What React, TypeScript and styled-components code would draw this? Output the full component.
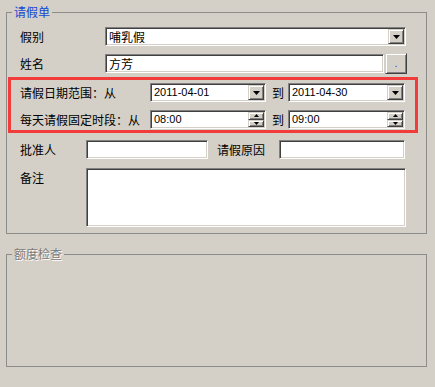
import * as React from 'react';
import styled, { createGlobalStyle } from 'styled-components';

const GlobalStyle = createGlobalStyle`
html, body {
  margin: 0;
  background: #d4d0c8;
}
body {
  font-family: "Noto Sans CJK SC", "Liberation Sans", sans-serif;
  font-size: 12px;
  color: #000;
}
`;

const Page = styled.div`
width: 435px;
height: 387px;
box-sizing: border-box;
padding: 5px 8px 0 6px;
display: flex;
flex-direction: column;
`;

const Group = styled.fieldset<{ $gap?: number }>`
margin: ${(p) => p.$gap || 0}px 0 0 0;
padding: 0;
border: 1px solid #8c8c88;
min-width: 0;
`;

const Legend = styled.legend<{ $muted?: boolean }>`
margin-left: 5px;
padding: 0 2px;
font-size: 12px;
line-height: 14px;
color: ${(p) => (p.$muted ? '#7c7c7c' : '#1446d2')};
text-shadow: ${(p) => (p.$muted ? '1px 1px 0 #ffffff' : 'none')};
`;

const Content = styled.div`
display: flex;
flex-direction: column;
padding: 8px 0 6px 0;
`;

const Row = styled.div<{ $top?: number; $pad?: number; $h?: number }>`
display: flex;
align-items: center;
height: ${(p) => p.$h || 19}px;
margin-top: ${(p) => p.$top || 0}px;
padding-left: ${(p) => (p.$pad === undefined ? 13 : p.$pad)}px;
`;

const TallRow = styled(Row)`
align-items: flex-start;
height: auto;
`;

const Label = styled.span<{ $w: number; $left?: number }>`
width: ${(p) => p.$w}px;
margin-left: ${(p) => p.$left || 0}px;
flex: none;
line-height: 19px;
white-space: nowrap;
`;

const ToLabel = styled.span`
width: 12px;
margin: 0 4px 0 6px;
line-height: 19px;
flex: none;
`;

const Field = styled.div<{ $w: number; $h?: number }>`
width: ${(p) => p.$w}px;
height: ${(p) => p.$h || 19}px;
box-sizing: border-box;
flex: none;
display: flex;
align-items: stretch;
background: #ffffff;
border: 1px solid;
border-color: #808080 #ffffff #ffffff #808080;
box-shadow: inset 1px 1px 0 #404040, inset -1px -1px 0 #d4d0c8;
padding: 1px 1px 1px 1px;
`;

const Value = styled.span<{ $num?: boolean }>`
flex: 1;
padding-left: 2px;
line-height: 15px;
font-family: ${(p) =>
  p.$num ? '"Liberation Sans", sans-serif' : '"Noto Sans CJK SC", sans-serif'};
font-size: ${(p) => (p.$num ? '11px' : '12px')};
white-space: nowrap;
overflow: hidden;
`;

const Raised = styled.div`
background: #d4d0c8;
box-sizing: border-box;
border: 1px solid;
border-color: #d4d0c8 #404040 #404040 #d4d0c8;
box-shadow: inset 1px 1px 0 #ffffff, inset -1px -1px 0 #808080;
display: flex;
align-items: center;
justify-content: center;
`;

const DropButton = styled(Raised)`
width: 16px;
flex: none;
`;

const SpinColumn = styled.div`
width: 16px;
flex: none;
display: flex;
flex-direction: column;
`;

const SpinButton = styled(Raised)`
flex: 1;
`;

const DotButton = styled(Raised)`
width: 22px;
height: 21px;
margin-left: 1px;
color: #3a3af0;
font-family: "Liberation Sans", sans-serif;
font-size: 11px;
line-height: 11px;
align-items: flex-end;
padding-bottom: 4px;
`;

const Highlight = styled.div`
width: 410px;
box-sizing: border-box;
margin: 3px 0 0 1px;
border: 3px solid #f23b3b;
padding: 3px 0 1px 0;
`;

const Spacer = styled.div`
height: 105px;
`;

const Arrow = ({ up }: { up?: boolean }) => (
  <svg width="7" height="4" viewBox="0 0 7 4">
    <polygon points={up ? '3.5,0 7,4 0,4' : '0,0 7,0 3.5,4'} fill="#000" />
  </svg>
);

const SmallArrow = ({ up }: { up?: boolean }) => (
  <svg width="5" height="3" viewBox="0 0 5 3">
    <polygon points={up ? '2.5,0 5,3 0,3' : '0,0 5,0 2.5,3'} fill="#000" />
  </svg>
);

function Combo({ w, value, num }: { w: number; value: string; num?: boolean }) {
  return (
    <Field $w={w}>
      <Value $num={num}>{value}</Value>
      <DropButton>
        <Arrow />
      </DropButton>
    </Field>
  );
}

function Spin({ w, value }: { w: number; value: string }) {
  return (
    <Field $w={w}>
      <Value $num>{value}</Value>
      <SpinColumn>
        <SpinButton>
          <SmallArrow up />
        </SpinButton>
        <SpinButton>
          <SmallArrow />
        </SpinButton>
      </SpinColumn>
    </Field>
  );
}

export default function App() {
  return (
    <>
      <GlobalStyle />
      <Page>
        <Group>
          <Legend>请假单</Legend>
          <Content>
            <Row>
              <Label $w={85}>假别</Label>
              <Combo w={301} value="哺乳假" />
            </Row>
            <Row $top={7} $h={21}>
              <Label $w={85}>姓名</Label>
              <Field $w={279}>
                <Value>方芳</Value>
              </Field>
              <DotButton>.</DotButton>
            </Row>
            <Highlight>
              <Row $pad={9}>
                <Label $w={130}>请假日期范围：从</Label>
                <Combo w={116} value="2011-04-01" num />
                <ToLabel>到</ToLabel>
                <Combo w={117} value="2011-04-30" num />
              </Row>
              <Row $pad={9} $top={8}>
                <Label $w={130}>每天请假固定时段：从</Label>
                <Spin w={116} value="08:00" />
                <ToLabel>到</ToLabel>
                <Spin w={117} value="09:00" />
              </Row>
            </Highlight>
            <Row $top={7}>
              <Label $w={66}>批准人</Label>
              <Field $w={122} />
              <Label $w={62} $left={9}>请假原因</Label>
              <Field $w={126} />
            </Row>
            <TallRow $top={9}>
              <Label $w={66}>备注</Label>
              <Field $w={320} $h={59} />
            </TallRow>
          </Content>
        </Group>
        <Group $gap={13}>
          <Legend $muted>额度检查</Legend>
          <Spacer />
        </Group>
      </Page>
    </>
  );
}
